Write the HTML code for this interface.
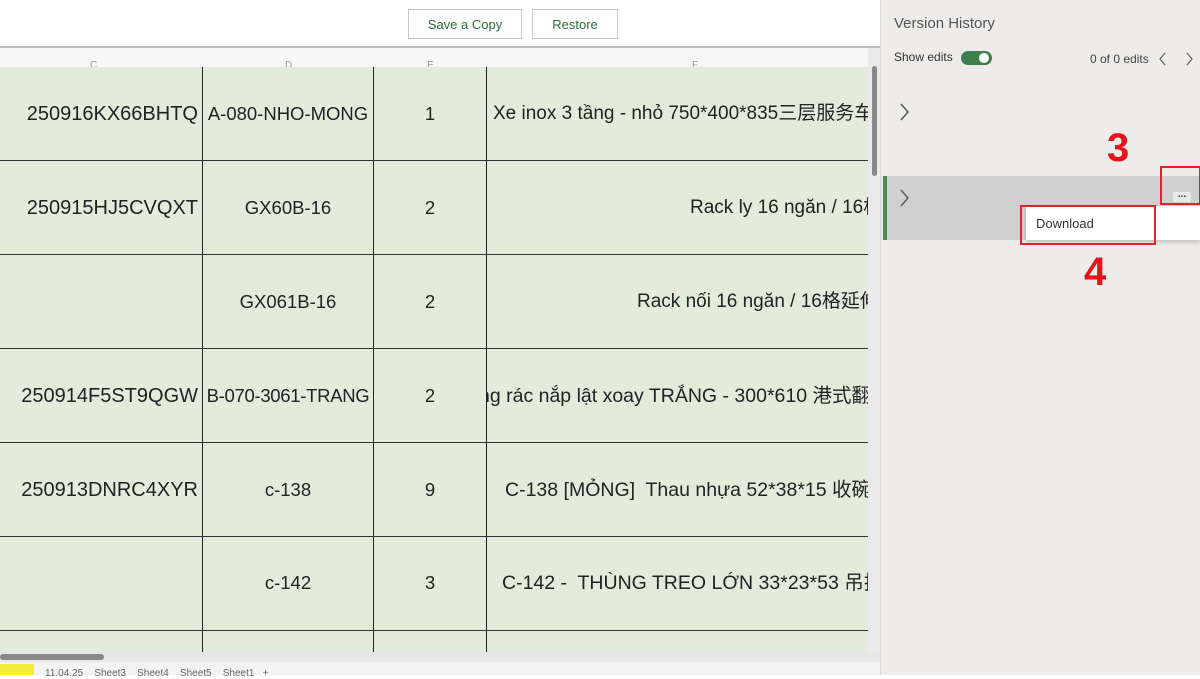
<!DOCTYPE html>
<html><head><meta charset="utf-8"><style>
*{margin:0;padding:0;box-sizing:border-box}
body{width:1200px;height:675px;overflow:hidden;position:relative;background:#fff;font-family:"Liberation Sans","Noto Sans CJK SC",sans-serif;color:#222}
.abs{position:absolute}
.btn{position:absolute;top:9px;height:30px;border:1px solid #c8c8c8;background:#fff;font-size:13px;color:#2e6b3e;display:flex;align-items:center;justify-content:center}
.grid{position:absolute;left:0;top:67px;width:868px;height:585px;background:#e2ecdb;overflow:hidden}
.vl{position:absolute;top:0;width:1px;height:600px;background:#222}
.hl{position:absolute;left:0;width:868px;height:1px;background:#333}
.t{position:absolute;font-size:18.5px;white-space:nowrap;line-height:22px;transform:translateY(-11px)}
.c{text-align:center}
.ecol{position:absolute;left:487px;top:0;width:381px;height:585px;overflow:hidden}
.hdr{position:absolute;top:60px;font-size:10px;color:#999}
.panel{position:absolute;left:880px;top:0;width:320px;height:675px;background:#edecea;border-left:1px solid #d8d8d8}
.red{color:#e8121b;font-weight:bold;font-size:40px;position:absolute}
</style></head><body>
<div class="btn" style="left:408px;width:114px">Save a Copy</div>
<div class="btn" style="left:532px;width:86px">Restore</div>
<div class="abs" style="left:0;top:46px;width:880px;height:2px;background:#bdbdbd"></div>
<div class="abs" style="left:0;top:48px;width:868px;height:19px;background:#f7f7f7"></div>
<div class="hdr" style="left:90px">C</div><div class="hdr" style="left:285px">D</div><div class="hdr" style="left:427px">E</div><div class="hdr" style="left:692px">F</div>
<div class="grid">
<div class="vl" style="left:202px"></div><div class="vl" style="left:373px"></div><div class="vl" style="left:486px"></div>
<div class="hl" style="top:93px"></div><div class="hl" style="top:187px"></div><div class="hl" style="top:281px"></div><div class="hl" style="top:375px"></div><div class="hl" style="top:469px"></div><div class="hl" style="top:563px"></div>
<div class="t" style="right:670px;top:47px;font-size:20px">250916KX66BHTQ</div>
<div class="t" style="right:670px;top:141px;font-size:20px">250915HJ5CVQXT</div>
<div class="t" style="right:670px;top:329px;font-size:20px">250914F5ST9QGW</div>
<div class="t" style="right:670px;top:423px;font-size:20px">250913DNRC4XYR</div>
<div class="t c" style="left:203px;width:170px;top:47px">A-080-NHO-MONG</div>
<div class="t c" style="left:203px;width:170px;top:141px">GX60B-16</div>
<div class="t c" style="left:203px;width:170px;top:235px">GX061B-16</div>
<div class="t c" style="left:198px;width:180px;top:329px;letter-spacing:-0.3px">B-070-3061-TRANG</div>
<div class="t c" style="left:203px;width:170px;top:423px">c-138</div>
<div class="t c" style="left:203px;width:170px;top:516px">c-142</div>
<div class="t c" style="left:374px;width:112px;top:47px">1</div>
<div class="t c" style="left:374px;width:112px;top:141px">2</div>
<div class="t c" style="left:374px;width:112px;top:235px">2</div>
<div class="t c" style="left:374px;width:112px;top:329px">2</div>
<div class="t c" style="left:374px;width:112px;top:423px">9</div>
<div class="t c" style="left:374px;width:112px;top:516px">3</div>
<div class="ecol">
<div class="t" style="left:6px;top:47px;font-size:19px">Xe inox 3 tầng - nhỏ 750*400*835三层服务车</div>
<div class="t" style="left:203px;top:141px;font-size:19px">Rack ly 16 ngăn / 16格杯架</div>
<div class="t" style="left:150px;top:235px;font-size:19px">Rack nối 16 ngăn / 16格延伸架</div>
<div class="t" style="left:-8px;top:329px;font-size:19.5px">ng rác nắp lật xoay TRẮNG - 300*610 港式翻盖</div>
<div class="t" style="left:18px;top:423px;font-size:19.5px">C-138 [MỎNG]&nbsp; Thau nhựa 52*38*15 收碗盆</div>
<div class="t" style="left:15px;top:516px;font-size:19.5px">C-142 -&nbsp; THÙNG TREO LỚN 33*23*53 吊挂桶</div>
</div>
</div>
<div class="abs" style="left:868px;top:48px;width:12px;height:604px;background:#eaeaea"></div>
<div class="abs" style="left:872px;top:66px;width:5px;height:110px;background:#888;border-radius:3px"></div>
<div class="abs" style="left:0;top:652px;width:880px;height:10px;background:#e6e6e6"></div>
<div class="abs" style="left:0;top:654px;width:104px;height:6px;background:#888;border-radius:3px"></div>
<div class="abs" style="left:0;top:662px;width:880px;height:13px;background:#f3f3f3"></div>
<div class="abs" style="left:0;top:664px;width:34px;height:11px;background:#f3ee3a"></div>
<div class="abs" style="left:45px;top:668px;font-size:10px;color:#666;white-space:nowrap">11.04.25 &nbsp;&nbsp; Sheet3 &nbsp;&nbsp; Sheet4 &nbsp;&nbsp; Sheet5 &nbsp;&nbsp; Sheet1 &nbsp; +</div>
<div class="panel">
<div class="abs" style="left:13px;top:15px;font-size:15px;color:#555">Version History</div>
<div class="abs" style="left:13px;top:50px;font-size:12px;color:#333">Show edits</div>
<div class="abs" style="left:80px;top:51px;width:31px;height:14px;background:#3f7f4c;border-radius:7px"><div class="abs" style="left:18px;top:2px;width:10px;height:10px;border-radius:5px;background:#fff"></div></div>
<div class="abs" style="left:209px;top:52px;font-size:12px;color:#444">0 of 0 edits</div>
<svg class="abs" style="left:277px;top:52px" width="10" height="14"><path d="M7 1L2 7L7 13" fill="none" stroke="#666" stroke-width="1.3"/></svg>
<svg class="abs" style="left:303px;top:52px" width="10" height="14"><path d="M3 1L8 7L3 13" fill="none" stroke="#666" stroke-width="1.3"/></svg>
<svg class="abs" style="left:17px;top:103px" width="12" height="18"><path d="M3 1L10 9L3 17" fill="none" stroke="#555" stroke-width="1.4"/></svg>
<div class="abs" style="left:2px;top:176px;width:318px;height:64px;background:#d0d0d0;border-left:4px solid #4d8a58"></div>
<svg class="abs" style="left:17px;top:189px" width="12" height="18"><path d="M3 1L10 9L3 17" fill="none" stroke="#555" stroke-width="1.4"/></svg>
<div class="abs" style="left:292px;top:192px;width:18px;height:10px;background:#e8e8e8;font-size:10px;text-align:center;line-height:6px;color:#333;font-weight:bold">...</div>
<div class="abs" style="left:279px;top:166px;width:41px;height:39px;border:2px solid #e0242b"></div>
<div class="abs" style="left:145px;top:206px;width:175px;height:34px;background:#fff;box-shadow:0 2px 4px rgba(0,0,0,.2)"></div>
<div class="abs" style="left:155px;top:216px;font-size:13px;color:#333">Download</div>
<div class="abs" style="left:139px;top:205px;width:136px;height:40px;border:2px solid #e0242b"></div>
<div class="red" style="left:226px;top:126px">3</div>
<div class="red" style="left:203px;top:250px">4</div>
</div>
</body></html>
